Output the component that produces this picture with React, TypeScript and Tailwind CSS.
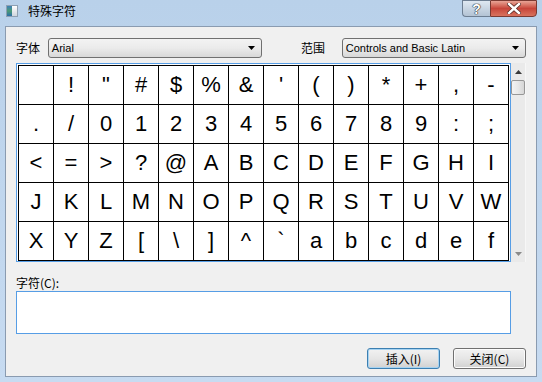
import React from 'react';

const cjk = { fontFamily: '"Noto Sans CJK SC", "Noto Sans", sans-serif' };
const latin = { fontFamily: '"Liberation Sans", Arial, sans-serif' };

// characters from space up, the underscore is not listed, 14 per row
const chars = Array.from({ length: 71 }, (_, i) => String.fromCharCode(32 + i)).filter((c) => c !== '_');

const ComboBox = ({ value, width }: { value: string; width: string }) => (
  <div
    className={`${width} h-[20px] flex items-center justify-between rounded-[3px] border border-[#707070] bg-gradient-to-b from-[#f3f3f3] via-[#ebebeb] to-[#d8d8d8] pl-[3px] pr-[6px]`}
  >
    <span className="text-[11px] text-black leading-none" style={latin}>
      {value}
    </span>
    <svg width="7" height="4" viewBox="0 0 7 4">
      <path d="M0 0 H7 L3.5 4 Z" fill="#000" />
    </svg>
  </div>
);

const Button = ({ label, primary }: { label: string; primary?: boolean }) => (
  <button
    className={`w-[73px] h-[21px] rounded-[3px] border text-[12px] text-black leading-none bg-gradient-to-b from-[#f2f2f2] via-[#e6e6e6] to-[#d1d1d1] ${
      primary ? 'border-[#3c7fb1] shadow-[inset_0_0_0_1px_#a6d3f2]' : 'border-[#707070] shadow-[inset_0_0_0_1px_#fcfcfc]'
    }`}
    style={cjk}
  >
    {label}
  </button>
);

const App = () => {
  return (
    <div className="w-[542px] h-[382px] flex flex-col bg-gradient-to-b from-[#b9d1ea] to-[#c7dbf1]">
      {/* title bar */}
      <div className="h-[26px] flex items-start">
        <div className="mt-[5px] ml-[6px] w-[12px] h-[12px] flex border border-[#8fa0b2]">
          <div className="w-[5px] h-full bg-gradient-to-b from-[#3f7fb5] via-[#4d9a73] to-[#2f6ea5]" />
          <div className="flex-1 h-full bg-gradient-to-b from-[#ffffff] to-[#d0d6dd]" />
        </div>
        <span className="ml-[10px] mt-[3px] text-[12px] leading-[16px] text-black" style={cjk}>
          特殊字符
        </span>
        <div className="ml-auto mr-[5px] flex h-[17px]">
          <div className="w-[28px] h-full flex items-center justify-center rounded-bl-[4px] border border-r-0 border-[#6d7e92] bg-gradient-to-b from-[#dfe8f2] to-[#b3c3d4]">
            <span
              className="text-[14px] font-bold leading-none text-white [text-shadow:0_0_1px_#222,0_0_1px_#222,0_0_1px_#222]"
              style={latin}
            >
              ?
            </span>
          </div>
          <div className="w-[47px] h-full flex items-center justify-center rounded-br-[4px] border border-[#7a3a32] bg-gradient-to-b from-[#e8a496] via-[#c7453a] to-[#d8725e]">
            <svg width="14" height="11" viewBox="0 0 14 11">
              <path d="M2 1 L12 10 M12 1 L2 10" stroke="#5a2a24" strokeWidth="4" strokeLinecap="square" />
              <path d="M2 1 L12 10 M12 1 L2 10" stroke="#fff" strokeWidth="2.4" strokeLinecap="square" />
            </svg>
          </div>
        </div>
      </div>

      {/* client area */}
      <div className="mx-[5px] mb-[5px] h-[351px] border border-[#8a9bb0] bg-[#f0f0f0] flex flex-col pt-[11px] pl-[10px] pr-[10px]">
        <div className="flex items-center h-[20px]">
          <span className="w-[32px] text-[12px] text-black" style={cjk}>
            字体
          </span>
          <ComboBox value="Arial" width="w-[215px]" />
          <span className="ml-[39px] w-[41px] text-[12px] text-black" style={cjk}>
            范围
          </span>
          <ComboBox value="Controls and Basic Latin" width="w-[185px]" />
        </div>

        <div className="mt-[5px] flex h-[199px]">
          <div className="border border-[#569de5] bg-white p-px">
            <div className="grid grid-cols-[repeat(14,34px)] grid-rows-[repeat(5,38px)] gap-px bg-black p-px">
              {chars.map((c, i) => (
                <div
                  key={i}
                  className="bg-white flex items-center justify-center text-[22px] leading-none text-black"
                  style={latin}
                >
                  {c}
                </div>
              ))}
            </div>
          </div>
          {/* scrollbar */}
          <div className="w-[15px] flex flex-col items-center bg-[#eaeaea] border-r border-[#f7f7f7]">
            <div className="h-[17px] flex items-center justify-center">
              <svg width="7" height="4" viewBox="0 0 7 4">
                <path d="M3.5 0 L7 4 H0 Z" fill="#3a3a3a" />
              </svg>
            </div>
            <div className="w-[14px] h-[15px] rounded-[2px] border border-[#979797] bg-gradient-to-r from-[#f3f3f3] via-[#e8e8e8] to-[#d6d6d6]" />
            <div className="flex-1" />
            <div className="h-[17px] flex items-center justify-center">
              <svg width="7" height="4" viewBox="0 0 7 4">
                <path d="M0 0 H7 L3.5 4 Z" fill="#8a8a8a" />
              </svg>
            </div>
          </div>
        </div>

        <div className="mt-[13px] h-[16px] text-[12px] leading-[16px] text-black" style={cjk}>
          字符(C):
        </div>
        <div className="w-[495px] h-[43px] border border-[#569de5] bg-white" />

        <div className="mt-[14px] flex justify-end gap-[13px]">
          <Button label="插入(I)" primary />
          <Button label="关闭(C)" />
        </div>
      </div>
    </div>
  );
};

export default App;
